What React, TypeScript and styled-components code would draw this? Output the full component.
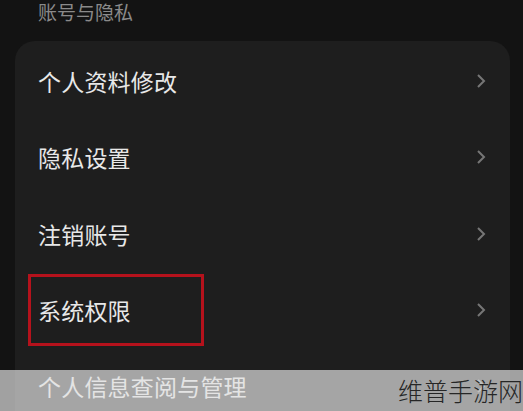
import * as React from 'react';
import styled, { createGlobalStyle } from 'styled-components';

const GlobalStyle = createGlobalStyle`
  html, body {
    margin: 0;
    padding: 0;
    background: #131313;
    overflow: hidden;
  }
  body {
    font-family: "Noto Sans CJK SC", "Noto Sans", sans-serif;
  }
`;

const Page = styled.div`
  position: relative;
  width: 523px;
  height: 411px;
  overflow: hidden;
  padding-left: 15px;
  box-sizing: border-box;
  background: #131313;
`;

const SectionTitle = styled.div`
  height: 23px;
  line-height: 23px;
  padding-left: 23px;
  font-size: 19px;
  color: #8a8a8a;
`;

const Card = styled.div`
  margin-top: 18px;
  width: 495px;
  padding-top: 2px;
  background: #1e1e1e;
  border-radius: 20px 20px 0 0;
`;

const Row = styled.div`
  position: relative;
  height: 76.3px;
  display: flex;
  align-items: center;
  justify-content: space-between;
  padding: 0 24px 0 23px;
`;

const Label = styled.span`
  font-size: 23px;
  color: #e8e8e8;
  letter-spacing: 0.2px;
`;

const Highlight = styled.div`
  position: absolute;
  left: 13px;
  top: 2px;
  width: 176px;
  height: 72px;
  box-sizing: border-box;
  border: 3px solid #b5121c;
`;

const Strip = styled.div`
  position: absolute;
  left: 0;
  right: 0;
  bottom: 0;
  height: 41px;
  background: rgba(226, 226, 226, 0.69);
`;

const Watermark = styled.div`
  position: absolute;
  right: 0;
  bottom: 7px;
  font-size: 25px;
  line-height: 28px;
  font-weight: 300;
  color: #262626;
`;

const Chevron = () => (
  <svg width="10" height="16" viewBox="0 0 10 16">
    <path d="M2 2 L8 8 L2 14" fill="none" stroke="#767676" strokeWidth="2" />
  </svg>
);

const items = ['个人资料修改', '隐私设置', '注销账号', '系统权限', '个人信息查阅与管理'];

export default function App() {
  return (
    <Page>
      <GlobalStyle />
      <SectionTitle>账号与隐私</SectionTitle>
      <Card>
        {items.map((label, i) => (
          <Row key={label}>
            <Label>{label}</Label>
            <Chevron />
            {i === 3 && <Highlight />}
          </Row>
        ))}
      </Card>
      <Strip>
        <Watermark>维普手游网</Watermark>
      </Strip>
    </Page>
  );
}
